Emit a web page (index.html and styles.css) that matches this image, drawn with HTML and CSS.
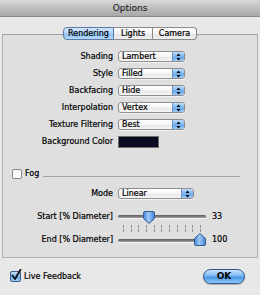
FILE: index.html
```html
<!DOCTYPE html>
<html>
<head>
<meta charset="utf-8">
<title>Options</title>
<link rel="stylesheet" href="styles.css">
</head>
<body>
<div class="window">
  <div class="titlebar">Options</div>

  <div class="tabs">
    <div class="tab tab-rendering selected">Rendering</div>
    <div class="tab tab-lights">Lights</div>
    <div class="tab tab-camera">Camera</div>
  </div>

  <div class="tabbox">
    <div class="form">
      <div class="label">Shading</div>
      <div class="popup"><span class="popup-text">Lambert</span><span class="popup-arrows"><svg width="5" height="8" viewBox="0 0 5 8"><path d="M2.5 0.5 L4.5 3 L0.5 3 Z M2.5 7.5 L4.5 5 L0.5 5 Z" fill="#000"/></svg></span></div>

      <div class="label">Style</div>
      <div class="popup"><span class="popup-text">Filled</span><span class="popup-arrows"><svg width="5" height="8" viewBox="0 0 5 8"><path d="M2.5 0.5 L4.5 3 L0.5 3 Z M2.5 7.5 L4.5 5 L0.5 5 Z" fill="#000"/></svg></span></div>

      <div class="label">Backfacing</div>
      <div class="popup"><span class="popup-text">Hide</span><span class="popup-arrows"><svg width="5" height="8" viewBox="0 0 5 8"><path d="M2.5 0.5 L4.5 3 L0.5 3 Z M2.5 7.5 L4.5 5 L0.5 5 Z" fill="#000"/></svg></span></div>

      <div class="label">Interpolation</div>
      <div class="popup"><span class="popup-text">Vertex</span><span class="popup-arrows"><svg width="5" height="8" viewBox="0 0 5 8"><path d="M2.5 0.5 L4.5 3 L0.5 3 Z M2.5 7.5 L4.5 5 L0.5 5 Z" fill="#000"/></svg></span></div>

      <div class="label">Texture Filtering</div>
      <div class="popup"><span class="popup-text">Best</span><span class="popup-arrows"><svg width="5" height="8" viewBox="0 0 5 8"><path d="M2.5 0.5 L4.5 3 L0.5 3 Z M2.5 7.5 L4.5 5 L0.5 5 Z" fill="#000"/></svg></span></div>

      <div class="label">Background Color</div>
      <div class="swatch"></div>
    </div>

    <div class="fog-row">
      <span class="checkbox"></span>
      <span class="fog-label">Fog</span>
      <span class="separator"></span>
    </div>

    <div class="form form-fog">
      <div class="label">Mode</div>
      <div class="popup popup-wide"><span class="popup-text">Linear</span><span class="popup-arrows"><svg width="5" height="8" viewBox="0 0 5 8"><path d="M2.5 0.5 L4.5 3 L0.5 3 Z M2.5 7.5 L4.5 5 L0.5 5 Z" fill="#000"/></svg></span></div>
    </div>

    <div class="form form-sliders">
      <div class="label">Start [% Diameter]</div>
      <div class="slider-cell">
        <div class="slider">
          <div class="track"></div>
          <svg class="thumb thumb-down" style="left: 25px" width="12" height="13" viewBox="0 0 12 13">
            <defs>
              <linearGradient id="tg1" x1="0" y1="0" x2="1" y2="0">
                <stop offset="0" stop-color="#3f86dc"/>
                <stop offset="0.45" stop-color="#9fcaf5"/>
                <stop offset="1" stop-color="#3c82d8"/>
              </linearGradient>
            </defs>
            <path d="M2 0.5 H10 Q11.5 0.5 11.5 2 V7.5 L6 12.5 L0.5 7.5 V2 Q0.5 0.5 2 0.5 Z" fill="url(#tg1)" stroke="#3a5a8c" stroke-width="1"/>
          </svg>
        </div>
        <span class="value">33</span>
      </div>

      <div class="ticks-spacer"></div>
      <div class="ticks">
        <span></span><span></span><span></span><span></span><span></span><span></span><span></span><span></span><span></span><span></span><span></span>
      </div>

      <div class="label">End [% Diameter]</div>
      <div class="slider-cell slider-end">
        <div class="slider">
          <div class="track"></div>
          <svg class="thumb thumb-up" style="left: 76px" width="12" height="13" viewBox="0 0 12 13">
            <defs>
              <linearGradient id="tg2" x1="0" y1="0" x2="1" y2="0">
                <stop offset="0" stop-color="#3f86dc"/>
                <stop offset="0.45" stop-color="#9fcaf5"/>
                <stop offset="1" stop-color="#3c82d8"/>
              </linearGradient>
            </defs>
            <path d="M2 12.5 H10 Q11.5 12.5 11.5 11 V5.5 L6 0.5 L0.5 5.5 V11 Q0.5 12.5 2 12.5 Z" fill="url(#tg2)" stroke="#3a5a8c" stroke-width="1"/>
          </svg>
        </div>
        <span class="value">100</span>
      </div>
    </div>
  </div>

  <div class="bottom">
    <span class="checkbox checked"><svg width="13" height="13" viewBox="0 0 13 13"><path d="M2.5 6.5 L5 10 L10.5 0.8" fill="none" stroke="#111" stroke-width="1.8" stroke-linecap="round" stroke-linejoin="round"/></svg></span>
    <span class="live-label">Live Feedback</span>
    <span class="spacer"></span>
    <button class="ok">OK</button>
  </div>
</div>
</body>
</html>
```

FILE: styles.css
```css
html, body {
  margin: 0;
  padding: 0;
}

body {
  background: #e8e8e8;
  font-family: "DejaVu Sans", "Noto Sans", sans-serif;
  color: #000;
  font-size: 8px;
  -webkit-text-stroke: 0.2px #000;
}

.window {
  width: 260px;
  height: 295px;
  display: flex;
  flex-direction: column;
  background: #e8e8e8;
  overflow: hidden;
}

.titlebar {
  height: 16px;
  border-bottom: 1px solid #8c8c8c;
  background: linear-gradient(#d9d9d9, #b9b9b9 60%, #a8a8a8);
  display: flex;
  align-items: center;
  justify-content: center;
  font-size: 9px;
  color: #1e1e1e;
  -webkit-text-stroke: 0.15px #1e1e1e;
}

.tabs {
  margin-top: 10px;
  display: flex;
  justify-content: center;
  position: relative;
  z-index: 1;
  height: 13px;
}

.tab {
  box-sizing: border-box;
  height: 13px;
  border: 1px solid #8a8a8a;
  border-left: none;
  background: linear-gradient(#ffffff, #f3f3f3 50%, #e4e4e4 51%, #f0f0f0);
  display: flex;
  align-items: center;
  justify-content: center;
  font-size: 8px;
  line-height: 1;
}

.tab-rendering {
  width: 51px;
  border-left: 1px solid #7a7a9a;
  border-radius: 4px 0 0 4px;
}

.tab-lights {
  width: 39px;
}

.tab-camera {
  width: 44px;
  border-radius: 0 4px 4px 0;
}

.tab.selected {
  background: linear-gradient(#d3e7fb, #a9d0f6 50%, #87bdf2 51%, #b6dbfb);
  border-color: #5b79a6;
}

.tabbox {
  margin: -6px 2px 0 2px;
  height: 224px;
  box-sizing: border-box;
  border: 1px solid #b1b1b1;
  border-top-color: #9c9c9c;
  background: #dfdfdf;
  padding-top: 13px;
  display: flex;
  flex-direction: column;
}

.form {
  display: grid;
  grid-template-columns: 110px auto;
  column-gap: 5px;
  grid-auto-rows: 17px;
  align-items: center;
}

.label {
  text-align: right;
  white-space: nowrap;
  font-size: 8px;
  line-height: 1;
}

.popup {
  box-sizing: border-box;
  width: 67px;
  height: 11px;
  border: 1px solid #8e8e8e;
  border-radius: 3px;
  background: linear-gradient(#ffffff, #f4f4f4 50%, #e6e6e6 51%, #f4f4f4);
  display: flex;
  align-items: center;
  overflow: hidden;
  box-shadow: 0 1px 0 rgba(255,255,255,0.6);
}

.popup-wide {
  width: 76px;
}

.popup-text {
  flex: 1;
  padding-left: 3px;
  font-size: 8px;
  line-height: 1;
}

.popup-arrows {
  width: 11px;
  height: 100%;
  border-left: 1px solid #6f8fbf;
  background: linear-gradient(#bcdcf9, #7db6ee 50%, #5ea2e8 51%, #9ccbf5);
  display: flex;
  align-items: center;
  justify-content: center;
}

.swatch {
  box-sizing: border-box;
  width: 41px;
  height: 12px;
  background: #0a0a22;
  border: 1px solid #6d6d6d;
}

.fog-row {
  margin-top: 19px;
  height: 10px;
  display: flex;
  align-items: center;
  padding: 0 17px 0 9px;
}

.checkbox {
  box-sizing: border-box;
  width: 10px;
  height: 10px;
  border: 1px solid #8a8a8a;
  border-radius: 2px;
  background: linear-gradient(#f4f4f4, #ffffff);
  flex: none;
  position: relative;
}

.fog-label {
  margin-left: 3px;
  font-size: 8px;
  line-height: 1;
}

.separator {
  flex: 1;
  height: 1px;
  background: #a3a3a3;
  margin-left: 4px;
  align-self: flex-end;
  margin-bottom: 2px;
}

.form-fog {
  margin-top: 6px;
}

.form-sliders {
  margin-top: 6px;
  grid-template-rows: 17px 8px 14px;
  grid-auto-rows: auto;
}

.slider-cell {
  display: flex;
  align-items: center;
  height: 100%;
}

.slider {
  position: relative;
  width: 88px;
  height: 100%;
  display: flex;
  align-items: center;
}

.track {
  width: 100%;
  height: 3px;
  border-radius: 2px;
  background: linear-gradient(#5e5e5e, #9a9a9a);
  box-shadow: 0 1px 0 rgba(255,255,255,0.7);
}

.thumb {
  position: absolute;
  display: block;
}

.thumb-down {
  top: 3px;
}

.thumb-up {
  top: 0;
}

.value {
  margin-left: 6px;
  font-size: 8px;
  line-height: 1;
}

.ticks-spacer {
  height: 8px;
}

.ticks {
  box-sizing: border-box;
  width: 88px;
  height: 8px;
  padding: 0 5px;
  display: flex;
  justify-content: space-between;
  align-self: stretch;
}

.ticks span {
  width: 1px;
  height: 8px;
  background: repeating-linear-gradient(#8c8c8c 0 3px, transparent 3px 4px);
}

.bottom {
  height: 37px;
  display: flex;
  align-items: center;
  padding: 0 15px 0 10px;
  box-sizing: border-box;
}

.checkbox.checked {
  width: 11px;
  height: 11px;
  border: 1px solid #3d5d8c;
  background: linear-gradient(#c3dffa, #82b9ef 50%, #5fa3e9 51%, #a4d0f7);
}

.checkbox.checked svg {
  position: absolute;
  left: -1px;
  top: -3px;
}

.live-label {
  margin-left: 3px;
  font-size: 8px;
  line-height: 1;
}

.spacer {
  flex: 1;
}

.ok {
  box-sizing: border-box;
  width: 42px;
  height: 15px;
  border: 1px solid #2f5489;
  border-radius: 8px;
  background: linear-gradient(#c6e2fb, #7fb8f0 45%, #4a97e6 55%, #8fc8f7);
  font-family: "DejaVu Sans", sans-serif;
  font-size: 9px;
  font-weight: bold;
  color: #000;
  padding: 0;
  line-height: 1;
  box-shadow: 0 1px 1px rgba(0,0,0,0.25);
  -webkit-text-stroke: 0;
}
```
